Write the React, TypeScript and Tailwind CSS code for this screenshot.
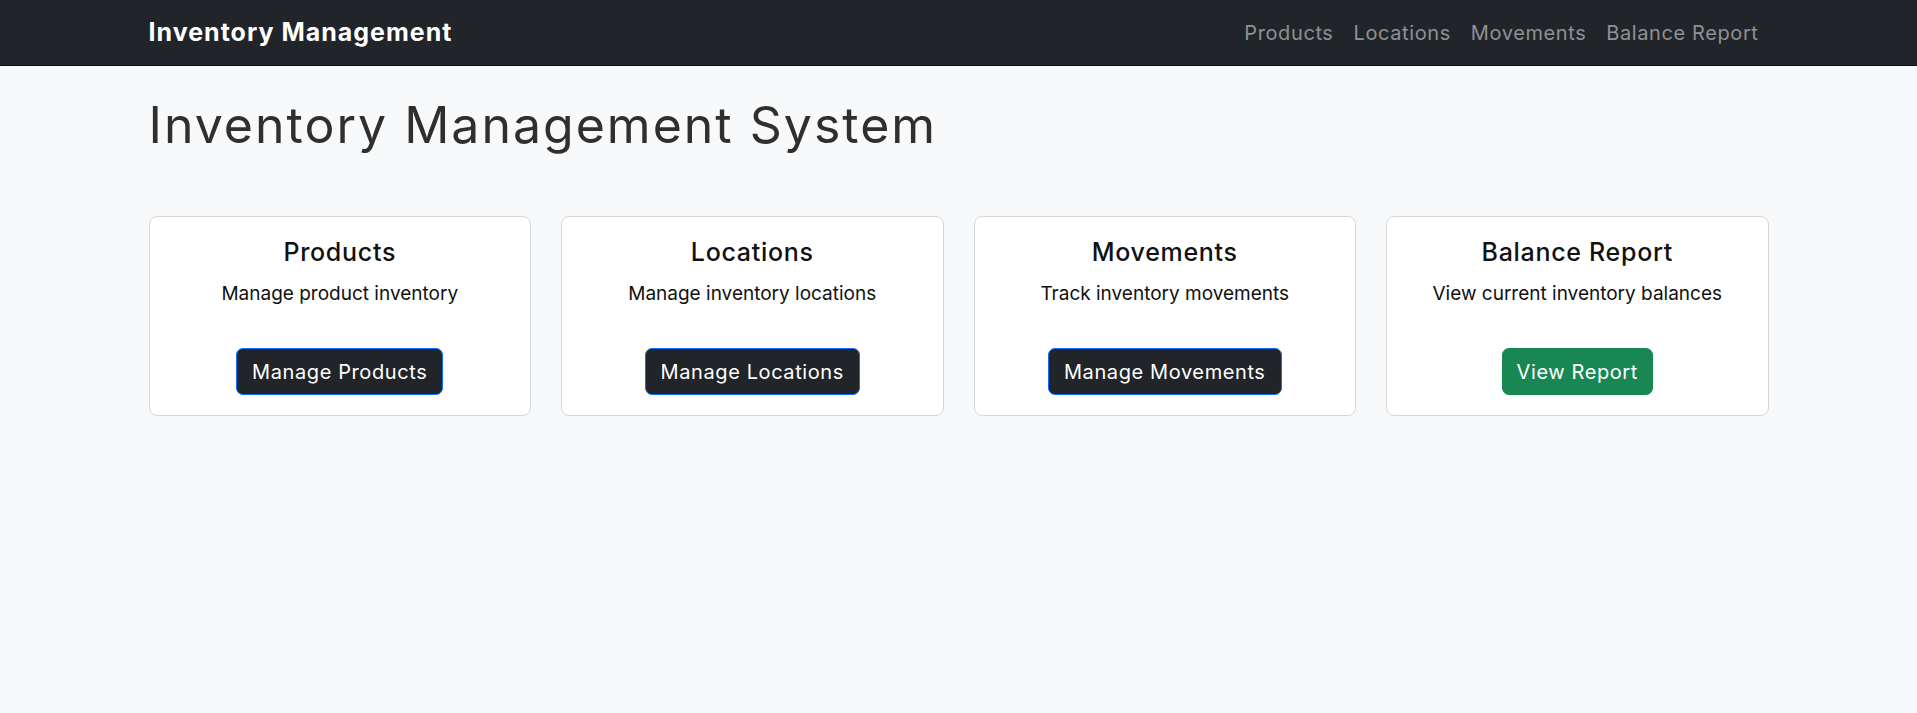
import React from "react";

const cards = [
  { title: "Products", desc: "Manage product inventory", btn: "Manage Products", green: false },
  { title: "Locations", desc: "Manage inventory locations", btn: "Manage Locations", green: false },
  { title: "Movements", desc: "Track inventory movements", btn: "Manage Movements", green: false },
  { title: "Balance Report", desc: "View current inventory balances", btn: "View Report", green: true },
];

export default function App() {
  return (
    <div className="min-h-[713px] bg-[#f8f9fa] text-[#212529] [font-family:Inter,'Noto_Sans',sans-serif]">
      <nav className="h-[66px] bg-[#212529] border-b border-[#0b0c0d]">
        <div className="mx-auto flex h-full w-[1650px] items-center justify-between px-[15px]">
          <a className="text-[25px] font-bold leading-[37px] text-white tracking-[1px]">Inventory Management</a>
          <div className="flex items-center">
            {["Products", "Locations", "Movements", "Balance Report"].map((l) => (
              <a key={l} className="px-[10px] text-[20px] leading-[30px] tracking-[0.6px] text-[#8f9193]">
                {l}
              </a>
            ))}
          </div>
        </div>
      </nav>
      <main className="mx-auto w-[1650px] px-[15px] pt-[29px]">
        <h1 className="text-[50px] font-normal leading-[60px] tracking-[2px] text-[#2f2f2f]">Inventory Management System</h1>
        <div className="mt-[61px] grid grid-cols-4 gap-[30px]">
          {cards.map((c) => (
            <div
              key={c.title}
              className="flex flex-col items-center rounded-[8px] border border-[#d6d7d8] bg-white px-[20px] pb-[20px] pt-[20px] text-center"
            >
              <h5 className="text-[25px] font-medium leading-[30px] tracking-[0.7px] text-[#111]">{c.title}</h5>
              <p className="mt-[12px] text-[19px] leading-[30px] text-[#111]">{c.desc}</p>
              <button
                className={
                  c.green
                    ? "mt-[39px] h-[47px] rounded-[7px] border border-[#198754] bg-[#198754] px-[14px] text-[20px] tracking-[0.6px] text-white"
                    : "mt-[39px] h-[47px] rounded-[7px] border border-[#0d6efd] bg-[#212529] px-[15px] text-[20px] tracking-[0.6px] text-white"
                }
              >
                {c.btn}
              </button>
            </div>
          ))}
        </div>
      </main>
    </div>
  );
}
